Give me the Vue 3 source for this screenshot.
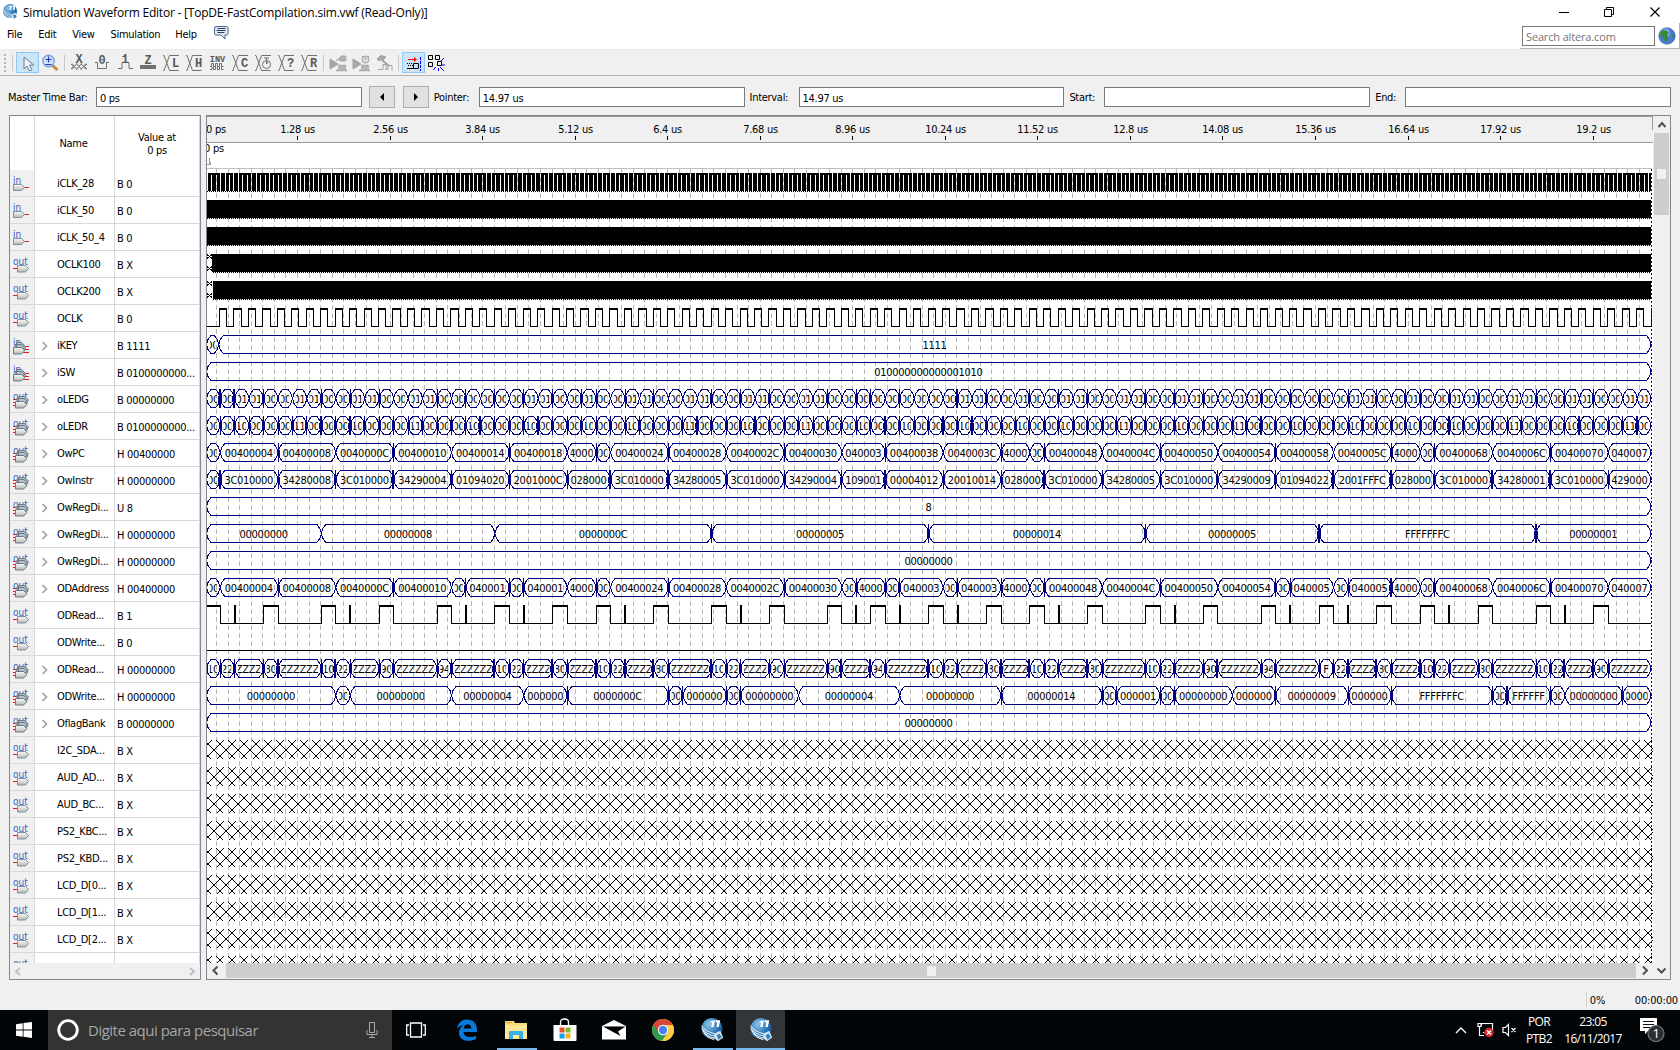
<script setup>
const UNIT = 14.46
const ORIGIN = 205.7
const END = 1651
const ROW_H = 27

const names = [
  ['in', 'iCLK_28', 'B 0'], ['in', 'iCLK_50', 'B 0'], ['in', 'iCLK_50_4', 'B 0'],
  ['out', 'OCLK100', 'B X'], ['out', 'OCLK200', 'B X'], ['out', 'OCLK', 'B 0'],
  ['inb', 'iKEY', 'B 1111'], ['inb', 'iSW', 'B 0100000000...'],
  ['outb', 'oLEDG', 'B 00000000'], ['outb', 'oLEDR', 'B 0100000000...'],
  ['outb', 'OwPC', 'H 00400000'], ['outb', 'OwInstr', 'H 00000000'],
  ['outb', 'OwRegDi...', 'U 8'], ['outb', 'OwRegDi...', 'H 00000000'],
  ['outb', 'OwRegDi...', 'H 00000000'], ['outb', 'ODAddress', 'H 00400000'],
  ['out', 'ODRead...', 'B 1'], ['out', 'ODWrite...', 'B 0'],
  ['outb', 'ODRead...', 'H 00000000'], ['outb', 'ODWrite...', 'H 00000000'],
  ['outb', 'OflagBank', 'B 00000000'],
  ['out', 'I2C_SDA...', 'B X'], ['out', 'AUD_AD...', 'B X'], ['out', 'AUD_BC...', 'B X'],
  ['out', 'PS2_KBC...', 'B X'], ['out', 'PS2_KBD...', 'B X'],
  ['out', 'LCD_D[0...', 'B X'], ['out', 'LCD_D[1...', 'B X'], ['out', 'LCD_D[2...', 'B X'],
  ['out', '', ''],
]
const rows = names.map(([kind, name, value]) => ({
  name, value, isIn: kind.startsWith('in'), bus: kind.endsWith('b'),
}))

const top = (i) => 173.5 + ROW_H * i
const px = (k) => (k === 0 ? 206.5 : k === 100 ? END : ORIGIN + UNIT * k)

/* A bus is written as "start label" pairs; "b" marks a glitchy edge and "t" a wider one. */
function parse(text) {
  const tokens = text.trim().split(/\s+/)
  const out = []
  for (let i = 0; i < tokens.length; i += 2) {
    out.push({ k: parseFloat(tokens[i]), mark: tokens[i].replace(/[\d.]/g, ''), label: tokens[i + 1] })
  }
  return out
}

const ledgOnes = [2, 3, 6, 7, 10, 11, 14, 15, 22, 23, 26, 29, 30, 33, 34, 37, 38, 41, 42, 52, 53, 56, 59, 60, 63, 64, 67, 68, 71, 72, 79, 80, 83, 86, 87, 90, 91, 94, 95, 98, 99]
const ledgBold = [1, 2, 4, 8, 10, 12, 16, 18, 20, 22, 24, 26, 27, 29, 31, 35, 37, 39, 43, 45, 46, 48, 52, 54, 57, 59, 61, 65, 67, 69, 73, 75, 77, 79, 81, 83, 84, 86, 88, 92, 94, 96]
const ledrTen = [2, 10, 18, 22, 26, 29, 37, 45, 48, 52, 56, 59, 67, 75, 79, 83, 86, 94]
const ledrEleven = [6, 14, 33, 41, 63, 71, 90, 98]
const units = [...Array(100).keys()]
const ledg = units.map((k) => ({ k, mark: [1, 2, 52].includes(k) ? 't' : ledgBold.includes(k) ? 'b' : '', label: ledgOnes.includes(k) ? '01' : '00' }))
const ledr = units.map((k) => ({ k, mark: k === 0 ? '' : [8, 10, 19, 23, 34, 38, 47, 51, 53, 73, 86, 95, 99].includes(k) ? 't' : 'b', label: ledrTen.includes(k) ? '10' : ledrEleven.includes(k) ? '11' : '00' }))

const busData = {
  6: parse('0 00 0.9 1111'),
  7: parse('0 010000000000001010'),
  8: ledg,
  9: ledr,
  10: parse('0 00 1 00400004 5b 00400008 9 0040000C 13b 00400010 17 00400014 21b 00400018 25 4000 27b 00 28 00400024 32b 00400028 36 0040002C 40b 00400030 44 040003 47b 00400038 51 0040003C 55b 4000 57 00 58b 00400048 62 0040004C 66b 00400050 70 00400054 74b 00400058 78 0040005C 82b 4000 84 00 85b 00400068 89 0040006C 93b 00400070 97 040007'),
  11: parse('0 00 1t 3C010000 5b 34280008 9b 3C010000 13t 34290004 17b 01094020 21b 2001000C 25b 028000 28t 3C010000 32t 34280005 36b 3C010000 40b 34290004 44b 109001 47t 00004012 51b 20010014 55b 028000 58t 3C010000 62b 34280005 66b 3C010000 70b 34290009 74b 01094022 78t 2001FFFC 82t 028000 85b 3C010000 89t 34280001 93t 3C010000 97b 429000'),
  12: parse('0 8'),
  13: parse('0 00000000 8 00000008 20 0000000C 35b 00000005 50b 00000014 65b 00000005 77t FFFFFFFC 92t 00000001'),
  14: parse('0 00000000'),
  15: parse('0 00 1 00400004 5b 00400008 9 0040000C 13b 00400010 17 00 18b 040001 21b 00 22b 040001 25 4000 27b 00 28 00400024 32b 00400028 36 0040002C 40b 00400030 44 00 45b 4000 47b 00 48b 040003 51 00 52b 040003 55b 4000 57 00 58b 00400048 62 0040004C 66b 00400050 70 00400054 74b 00 75b 040005 78 00 79b 040005 82t 4000 84 00 85b 00400068 89 0040006C 93b 00400070 97 040007'),
  18: parse('0b 10 1b 22 2b ZZZZ 4b 80 5t ZZZZZZ 8b 10 9t 22 10b ZZZZ 12b 90 13b ZZZZZZ 16b 94 17b ZZZZZZ 20t 10 21b 22 22b ZZZZ 24t 80 25b ZZZZ 27t 10 28b 22 29t ZZZZ 31t 80 32b ZZZZZZ 35t 10 36b 22 37b ZZZZ 39b 90 40b ZZZZZZ 43b 90 44t ZZZZ 46t 94 47b ZZZZZZ 50t 10 51b 22 52b ZZZZ 54b 80 55t ZZZZ 57t 10 58b 22 59b ZZZZ 61t 80 62b ZZZZZZ 65b 10 66b 22 67b ZZZZ 69b 90 70t ZZZZZZ 73b 94 74b ZZZZZZ 77b F 78b 22 79t ZZZZ 81t 80 82b ZZZZ 84t 10 85t 22 86b ZZZZ 88b 80 89b ZZZZZZ 92b 10 93b 22 94t ZZZZ 96t 90 97b ZZZZZZ'),
  19: parse('0 00000000 9 00 10 00000000 17 00000004 22 000000 25b 0000000C 32b 00 33b 000000 36b 00 37b 00000000 41 00000004 48 00000000 55b 00000014 62b 00 63b 000001 66b 00 67b 00000000 71 000000 74b 00000009 79b 000000 82b FFFFFFFC 89b 00 90t FFFFFF 93b 00 94 00000000 98b 0000'),
  20: parse('0 00000000'),
}

const buses = Object.entries(busData).map(([row, segs]) => {
  const y = top(+row)
  let d = ''
  let marks = ''
  const labels = []
  segs.forEach((s, i) => {
    const a = px(s.k)
    const b = px(i + 1 < segs.length ? segs[i + 1].k : 100)
    d += `M${a} ${y + 9}L${a + 1.5} ${y + 4}L${a + 4.5} ${y}H${b - 4.5}L${b - 1.5} ${y + 4}L${b} ${y + 9}L${b - 1.5} ${y + 14}L${b - 4.5} ${y + 18}H${a + 4.5}L${a + 1.5} ${y + 14}Z`
    if (s.mark) {
      const w = s.mark === 't' ? 2 : 1
      const x = Math.floor(a) - (w - 1)
      marks += `M${x} ${y - 0.5}h${w}v19h${-w}zM${x - 1} ${y + 6}h${w + 2}v6h${-w - 2}z`
    }
    labels.push({ text: s.label, x: a + 3.3, w: b - a - 6.6, c: (b - a - 6.6) / 2 })
  })
  return { row: +row, y, d, marks, labels }
})

/* iCLK_28: half period is slightly over one pixel, so columns alias. */
let clk28 = ''
{
  const half = 1.2911
  for (let n = 1, x = 205.6; x < END; n++) {
    const nx = x + half
    clk28 += `M${Math.floor(x)} 173h1v18h-1z`
    if (n % 2) {
      const w = Math.floor(nx) - Math.floor(x) + 1
      clk28 += `M${Math.floor(x)} 173h${w}v2h${-w}z`
    }
    x = nx
  }
}

let oclk = 'M206 326.5'
for (let k = 1; k < 100; k++) {
  const r = Math.floor(205 + UNIT * k) + 0.5
  const f = Math.floor(205 + UNIT * (k + 0.5)) + 0.5
  oclk += `H${r}V308.5H${f}V326.5`
}
oclk += 'H1651V308'
let oclkTop = ''
for (let k = 1; k < 100; k++) {
  oclkTop += `M${Math.floor(205 + UNIT * k)} 309.5H${Math.floor(205 + UNIT * (k + 0.5)) + 1}`
}

const readHigh = [4, 8, 12, 16, 20, 24, 27, 31, 35, 39, 43, 46, 50, 54, 57, 61, 65, 69, 73, 77, 81, 84, 88, 92, 96]
const readSpike = [2, 10, 18, 22, 29, 37, 45, 48, 52, 59, 67, 75, 79, 86, 94]
let read = 'M206 605.5H220.5V623.5'
let readThick = 'M206 606H221'
readHigh.forEach((k) => {
  const a = Math.floor(px(k)) + 0.5
  const b = Math.floor(px(k + 1)) + 0.5
  read += `H${a}V605.5H${b}V623.5`
  readThick += `M${a - 0.5} 606H${b + 0.5}`
})
read += 'H1651'
readSpike.forEach((k) => {
  readThick += `M${Math.round(px(k))} 605V624`
})

let unknown = ''
for (let i = 21; i < 30; i++) {
  const y = 173 + ROW_H * i
  for (let cx = 195.5; cx < 1665; cx += 12) {
    unknown += `M${cx - 3.5} ${y}l19 19M${cx + 4.5} ${y}l-19 19`
  }
}
const shortX = [254.5, 281.5].map((y) => `M207 ${y}l5 4m-5 0l5 -4M207 ${y + 12}l5 4m-5 0l5 -4`).join('')

const grid = []
for (let k = 1; k < 125; k++) grid.push(Math.floor(205 + 11.568 * k) + 0.5)

const ticks = ['1.28', '2.56', '3.84', '5.12', '6.4', '7.68', '8.96', '10.24', '11.52', '12.8', '14.08', '15.36', '16.64', '17.92', '19.2']
  .map((t) => ({ text: t + ' us', x: Math.floor(205 + 72.3 * parseFloat(t)) }))

const tools = ['X', '0', '1', 'Z', 'XL', 'XH', 'INV', 'XC', 'clock', 'X?', 'XR']
</script>

<template>
  <div class="screen">
    <header class="title">
      <svg width="16" height="16" viewBox="0 0 32 32"><use href="#quartus" /></svg>
      <span class="caption">Simulation Waveform Editor - [TopDE-FastCompilation.sim.vwf (Read-Only)]</span>
      <svg class="winbtns" width="110" height="20" viewBox="0 0 110 20" fill="none" stroke="#000">
        <path d="M9 10.500h10M54.500 7.500h7v7h-7zM56.500 7V5.500h7v7h-2" />
        <path d="M100.500 5.500l9 9m0-9l-9 9" stroke-width="1.200" />
      </svg>
    </header>

    <nav class="menu">
      <span>File</span><span>Edit</span><span>View</span><span>Simulation</span><span>Help</span>
      <svg width="16" height="16" viewBox="0 0 16 16">
        <path d="M3 1.500h10.500q1.500 0 1.500 1.500v5.500q0 1.500-1.500 1.500H12v4l-4-4H3q-1.500 0-1.500-1.500V3Q1.500 1.500 3 1.500z" fill="#dfe8f8" stroke="#50658c" />
        <path d="M4.500 3.500h8M3.500 5.500h9M4.500 7.500h7" stroke="#333d55" />
      </svg>
      <div class="searchbox">
        <div class="search">Search altera.com</div>
        <svg width="18" height="18" viewBox="0 0 18 18">
          <circle cx="9" cy="9" r="8.200" fill="#4a7bd0" />
          <circle cx="7" cy="6" r="5" fill="#9dbcee" opacity=".7" />
          <path d="M2 6l3-3 4 1 2 2-2 2 1 2-1 4-2 1-1-4-3-1zM14 8l3 0-1 4-2-2z" fill="#348a34" />
          <circle cx="9" cy="9" r="8.200" fill="none" stroke="#3c5fa8" stroke-width=".7" />
        </svg>
      </div>
    </nav>

    <div class="toolbar">
      <svg class="grip" width="16" height="21"><path d="M5 2v19" stroke="#b4b4b4" stroke-width="2" stroke-dasharray="2 2" /><path d="M12.500 3v16" stroke="#c8c8c8" /></svg>
      <span class="tool on"><svg width="23" height="21" viewBox="0 0 23 21">
        <path d="M8 5v12l3-3 2.500 5 2.500-1.200-2.500-4.800h4.200z" fill="#eef2fa" stroke="#6d7a96" />
      </svg></span>
      <span class="tool"><svg width="23" height="21" viewBox="0 0 23 21">
        <path d="M13 13l5.500 5" stroke="#c98a3c" stroke-width="3" />
        <circle cx="9.500" cy="9" r="5.700" fill="#cfe2fb" stroke="#7ba0d8" stroke-width="1.400" />
        <path d="M6.500 7.500h6M9.500 4.500v6M6.500 12.500h6" stroke="#2740b0" stroke-width="1.200" />
      </svg></span>
      <i class="sep"></i>
      <span v-for="t in tools" :key="t" class="tool"><svg width="23" height="21" viewBox="0 0 23 21" fill="none" stroke="#707070">
        <template v-if="t === 'X'">
          <path d="M3 12l2.500 2.500L3 17M19 12l-2.500 2.500L19 17M4 11.500l5 6M9 11.500l-5 6M8.500 11.500l5 6M13.500 11.500l-5 6M13 11.500l5 6M18 11.500l-5 6" />
          <text class="glyph" x="11" y="10.500">X</text>
        </template>
        <template v-else-if="t === '0'">
          <path d="M4 10.500h2.500v6h9v-6H18" /><text class="glyph" x="11" y="12">0</text>
        </template>
        <template v-else-if="t === '1'">
          <path d="M4 16.500h4v-6h7v6h4" /><text class="glyph" x="11" y="10.500">1</text>
        </template>
        <template v-else-if="t === 'Z'">
          <path d="M3 15h16" stroke-width="4" /><text class="glyph" x="11" y="11.500">Z</text>
        </template>
        <template v-else-if="t === 'INV'">
          <text class="inv" x="11.500" y="9.500">INV</text>
          <path d="M4 14.500h1.500v-3h2v3h2v-3h2v3h2v-3h2v3h2M4 17.500h2v-3M7.500 14.500v3h2v-3M11.500 14.500v3h2v-3M15.500 14.500v3h2" />
        </template>
        <template v-else>
          <path d="M3 3.500h1l5.500 15h9M11 3.500h8M3 18.500h1L9.500 3.500h2" />
          <g v-if="t === 'clock'"><circle cx="14.500" cy="12.500" r="4" /><path d="M12 6h5M14.500 6v6l1.500-2" /></g>
          <text v-else class="glyph" x="15.700" y="14.500">{{ t[1] }}</text>
        </template>
      </svg></span>
      <i class="sep"></i>
      <span v-for="n in 3" :key="n" class="tool"><svg width="23" height="21" viewBox="0 0 23 21" fill="none" stroke="#a2a2a2">
        <path v-if="n < 3" d="M3 7l8 5-8 5z" fill="#a8a8a8" />
        <path v-if="n < 3" d="M9 18.500h3v-5h2v5h2v-5h2v5h2" stroke-width="1.500" />
        <path v-if="n === 1" d="M9 8.500l3-1.500 2-3h4v5h-4l-2-1M18 5h2M18 8h2" fill="#b4b4b4" />
        <g v-if="n === 2"><circle cx="15.500" cy="7.500" r="3.500" fill="#dcdcdc" /><path d="M15.500 5v3M12 4l1 1M19 4l-1 1" /></g>
        <g v-if="n === 3"><path d="M4 7l4-3.500 5 1.500-3 3L9 7l-3 2z" fill="#a8a8a8" /><path d="M9 8l7 6" stroke-width="2" /><path d="M5 17.500h5v-5h3v5h2v-4h4v5" /></g>
      </svg></span>
      <i class="sep"></i>
      <span class="tool on"><svg width="23" height="21" viewBox="0 0 23 21" fill="none" stroke="#000">
        <path d="M6 7.500h6" stroke="#f00" /><path d="M12 5l3 2.500-3 2.500z" fill="#f00" stroke="none" />
        <path d="M5 11.500h6M6 13.500h5" stroke-dasharray="1 1" />
        <path d="M5 16.500h7M11.500 11.500h5v5h-5z" /><path d="M18.500 5v14" stroke="#00f" stroke-dasharray="3 1" />
      </svg></span>
      <span class="tool"><svg width="23" height="21" viewBox="0 0 23 21" fill="none" stroke="#000">
        <path d="M3.500 3.500h4v4h-4zM10.500 3.500h4v4h-4zM3.500 10.500h4v4h-4z" />
        <path d="M12.500 9.500h4v4h-4z" /><path d="M16 9l3-3M17 13h3M15 15l4 4M10.500 15l-2 3M13.500 16v3" stroke="#00f" />
      </svg></span>
    </div>

    <div class="timebar">
      <label>Master Time Bar:</label><div class="field">0 ps</div>
      <button class="nudge first"><svg width="6" height="8"><path d="M5 0v8L1 4z" /></svg></button>
      <button class="nudge"><svg width="6" height="8"><path d="M1 0v8l4-4z" /></svg></button>
      <label class="l2">Pointer:</label><div class="field">14.97 us</div>
      <label class="l3">Interval:</label><div class="field">14.97 us</div>
      <label class="l4">Start:</label><div class="field"></div>
      <label class="l5">End:</label><div class="field"></div>
    </div>

    <main class="panes">
      <section class="nodes">
        <div class="head"><span class="ic"></span><span class="nm">Name</span><span class="vl">Value at<br>0 ps</span></div>
        <div class="list">
          <div v-for="(r, i) in rows" :key="i" class="row">
            <span class="ic"><svg width="24" height="26" viewBox="10 0 24 26">
              <text class="dir" x="13" y="14">{{ r.isIn ? 'in' : 'out' }}</text>
              <template v-if="r.isIn">
                <g v-if="r.bus">
                  <path d="M23 14.500h6M23 17.500h6M23 20.500h6" stroke="#e02020" />
                  <path d="M16.500 10.500h5l4 4-4 4h-5zM15 12.500h6l5 4-5 4h-6z" fill="#b9c0c8" stroke="#66788c" />
                  <path d="M13.500 15.500h8l3.500 3-3.500 3.500h-8z" fill="url(#gate)" stroke="#66788c" />
                </g>
                <g v-else><path d="M24 17.500h5" stroke="#e02020" />
                  <path d="M13.500 14.500h8l3 3-3 3h-8z" fill="url(#gate)" stroke="#7b8fa6" /></g>
              </template>
              <template v-else>
                <g v-if="r.bus">
                  <path d="M13 13.500h5M13 16.500h5M13 19.500h4" stroke="#e02020" />
                  <path d="M18.500 10.500h6l4 3.500-4 3.500h-6zM17 12.500h7l4 3.500-4 4h-7z" fill="#b9c0c8" stroke="#66788c" />
                  <path d="M15.500 15.500h8l3.500 3-3.500 3.500h-8z" fill="url(#gate)" stroke="#66788c" />
                </g>
                <g v-else><path d="M13 17.500h4" stroke="#e02020" />
                  <path d="M17.500 14.500h8l3 3-3 3.500h-8z" fill="url(#gate)" stroke="#7b8fa6" /></g>
              </template>
            </svg></span>
            <span class="nm"><svg width="8" height="10" viewBox="0 0 8 10"><path v-if="r.bus" d="M1.500 1l4 4-4 4" fill="none" stroke="#a0a0a0" stroke-width="1.600" /></svg>{{ r.name }}</span>
            <span class="vl">{{ r.value }}</span>
          </div>
        </div>
        <div class="hscroll off">
          <svg width="8" height="9"><path d="M6 1L2 4.500 6 8" /></svg>
          <svg width="8" height="9"><path d="M2 1l4 3.500L2 8" /></svg>
        </div>
      </section>

      <section class="wave">
        <div class="upper">
          <svg class="canvas" width="1446" height="847" viewBox="207 116 1446 847" shape-rendering="crispEdges">
            <rect x="207" y="116" width="1446" height="26" fill="#f0f0f0" />
            <path d="M207 116.500h1446M207 142.500h1446M1652.500 116v14" stroke="#9a9a9a" fill="none" />
            <text x="206" y="133">0 ps</text>
            <g v-for="t in ticks" :key="t.text">
              <text :x="t.x + 0.5" y="133" text-anchor="middle">{{ t.text }}</text>
              <path :d="`M${t.x + 0.5} 136v4`" stroke="#000" />
            </g>
            <text x="204" y="152">0 ps</text>
            <path d="M209.500 158v6M207 164.500h3.500v-3" stroke="#a0a0a0" fill="none" />
            <path d="M207 168.500h1445" stroke="#bfbfbf" />
            <path v-for="x in grid" :key="x" :d="`M${x} 169V963`" stroke="#b8b8b8" stroke-dasharray="5 3" />

            <path :d="clk28" fill="#000" />
            <g fill="#000">
              <rect x="207" y="200" width="1444" height="18" /><rect x="207" y="227" width="1444" height="18" />
              <rect x="212" y="254" width="1439" height="18" /><rect x="213" y="281" width="1438" height="18" />
            </g>
            <path d="M207 191.500H1651M207 218.500H1651M207 245.500H1651M213 272.500H1651M213 299.500H1651" stroke="#000" stroke-dasharray="1 1" />
            <path :d="shortX" stroke="#000" />
            <path :d="oclk" stroke="#000" fill="none" />
            <path :d="oclkTop" stroke="#000" />
            <path :d="read" stroke="#000" fill="none" />
            <path :d="readThick" stroke="#000" stroke-width="2" />
            <path d="M207 650.500H1651" stroke="#000" />
            <path :d="unknown" stroke="#000" />
            <path d="M1651.500 169V963" stroke="#0000c8" stroke-dasharray="2 2" />

            <g v-for="b in buses" :key="b.row">
              <path :d="b.d" fill="none" stroke="#000080" />
              <path :d="b.marks" fill="#000080" />
              <svg v-for="(l, n) in b.labels" :key="n" :x="l.x" :y="b.y" :width="l.w" height="19">
                <text :x="l.c - 0.3" y="13.500" text-anchor="middle">{{ l.text }}</text>
              </svg>
            </g>
          </svg>
          <div class="vscroll">
            <svg width="16" height="17"><path d="M4.500 11l3.500-4 3.500 4" /></svg>
            <div class="thumb"><i></i></div>
          </div>
        </div>
        <div class="hscroll">
          <svg width="19" height="15"><path d="M10.500 3.500l-4 4 4 4" /></svg>
          <div class="thumb"><i></i></div>
          <svg width="17" height="15"><path d="M7 3.500l4 4-4 4" /></svg>
          <svg width="17" height="15" class="down"><path d="M4.500 5.500l4 4 4-4" /></svg>
        </div>
      </section>
    </main>

    <footer class="status"><span class="pct">0%</span><span>00:00:00</span></footer>

    <div class="taskbar">
      <span class="start"><svg width="16" height="16" viewBox="0 0 16 16"><path d="M0 2.200L6.700 1.200V7.600H0zM7.500 1.100L16 0v7.600H7.500zM0 8.400h6.700v6.400L0 13.800zM7.500 8.400H16V16l-8.500-1.200z" fill="#fff" /></svg></span>
      <div class="cortana">
        <svg width="22" height="22" viewBox="0 0 22 22"><circle cx="11" cy="11" r="9.300" fill="none" stroke="#fff" stroke-width="2.800" /></svg>
        <span>Digite aqui para pesquisar</span>
        <svg width="12" height="18" viewBox="0 0 12 18" fill="none" stroke="#a8a8a8"><path d="M3.500 1.500h5v10h-5zM1 9v4.500h10V9M6 13.500V17M3 16.500h6" /></svg>
      </div>
      <span class="app first"><svg width="20" height="16" viewBox="0 0 20 16" fill="none" stroke="#fff" stroke-width="1.300"><path d="M4.500 1h11v14h-11zM3 3H.700v10H3M17 3h2.300v10H17" /></svg></span>
      <span class="app"><svg width="22" height="22" viewBox="0 0 22 22">
        <path d="M1 10C2 3.500 6 .500 11 .500c6 0 10 4 10 10V13H7.500c.2 3.500 3 5 6.500 5 2.500 0 4.500-.6 6-1.600V20c-2 1.200-4.500 1.800-7.500 1.800C6.500 21.800 3 18.500 3 14c0-3.500 1.800-6.500 5-8.200C5 6.500 2.500 8 1 10zM7.700 9.500h7.600C15.300 7 14 5.300 11.700 5.300 9.500 5.300 8 7 7.700 9.500z" fill="#0a7ad8" /></svg></span>
      <span class="app open"><svg width="22" height="20" viewBox="0 0 22 20">
        <path d="M0 1h9l1 2h12v16H0z" fill="#f8d775" /><path d="M0 5h22v14H0z" fill="#ffe694" /><path d="M1 2h6v1H1z" fill="#e8a33a" />
        <path d="M4 11h14v8h-4v-4H8v4H4z" fill="#38b0e8" /></svg></span>
      <span class="app"><svg width="24" height="24" viewBox="0 0 24 24">
        <path d="M7.500 7V4q0-3 4-3t4 3v3" fill="none" stroke="#fff" stroke-width="1.300" /><path d="M.500 7h23v15q0 1-1 1h-21q-1 0-1-1z" fill="#fff" />
        <path d="M6.500 9.500h5v5h-5z" fill="#e64e27" /><path d="M12.500 9.500h5v5h-5z" fill="#7db92a" /><path d="M6.500 15.500h5v5h-5z" fill="#0f9fe2" /><path d="M12.500 15.500h5v5h-5z" fill="#f3b31d" /></svg></span>
      <span class="app"><svg width="24" height="20" viewBox="0 0 24 20"><path d="M0 6L12 0l12 6v13.500H0z" fill="#fff" /><path d="M1 6.500h22.500l-7.500 5 2.500 4.500z" fill="#000" /></svg></span>
      <span class="app"><svg width="22" height="22" viewBox="0 0 22 22">
        <circle cx="11" cy="11" r="11" fill="#e5c13e" /><path d="M11 11L1.500 5.500A11 11 0 0 0 10 22l5.800-8z" fill="#30984f" /><path d="M11 11V6h9.800A11 11 0 0 0 1.500 5.500L6 13z" fill="#d8473a" />
        <path d="M11 6h9.800A11 11 0 0 1 10 22l5.800-8.500z" fill="#fccc46" />
        <circle cx="11" cy="11" r="5.200" fill="#fff" /><circle cx="11" cy="11" r="4.200" fill="#4382f0" /></svg></span>
      <span class="app open"><svg width="24" height="24" viewBox="0 0 32 32"><use href="#quartus" /></svg></span>
      <span class="app active"><svg width="24" height="24" viewBox="0 0 32 32"><use href="#quartus" /></svg></span>
      <div class="tray">
        <svg width="12" height="8" viewBox="0 0 12 8"><path d="M1 7l5-5 5 5" fill="none" stroke="#fff" stroke-width="1.300" /></svg>
        <svg class="net" width="17" height="16" viewBox="0 0 17 16"><path d="M4.500 3.500V1.500h11v8M1 1.500h3v3H1zM2.500 5v8.500H7M6 10.500h3" fill="none" stroke="#fff" stroke-width="1.200" /><circle cx="12" cy="10.500" r="4.700" fill="#d9232e" /><path d="M10 8.500l4 4m0-4l-4 4" stroke="#fff" stroke-width="1.400" /></svg>
        <svg class="vol" width="15" height="14" viewBox="0 0 15 14"><path d="M1 4.500h2.500l3-3v11l-3-3H1zM9.500 5l4 4m0-4l-4 4" fill="none" stroke="#fff" stroke-width="1.200" /></svg>
        <div class="lang">POR<br>PTB2</div>
        <div class="clock">23:05<br>16/11/2017</div>
        <svg class="note" width="26" height="26" viewBox="0 0 26 26"><path d="M0 1h17v13H8l-3 3v-3H0z" fill="#fff" /><path d="M3 4.500h11M3 7.500h11M3 10.500h8" stroke="#111" stroke-width="1.200" /><circle cx="16" cy="16.500" r="8" fill="#2b2d30" stroke="#75787c" stroke-width="1.200" /><text x="16" y="21" text-anchor="middle">1</text></svg>
      </div>
    </div>

    <svg width="0" height="0" class="defs">
      <defs>
        <linearGradient id="gate" x1="0" y1="0" x2="0" y2="1"><stop offset="0" stop-color="#fafafa" /><stop offset="1" stop-color="#b8b8b0" /></linearGradient>
        <radialGradient id="ball" cx=".35" cy=".3" r=".8"><stop offset="0" stop-color="#8cc4ea" /><stop offset=".6" stop-color="#2c78b8" /><stop offset="1" stop-color="#0d4478" /></radialGradient>
        <g id="quartus">
          <circle cx="16" cy="14" r="14" fill="url(#ball)" />
          <path d="M14 4l6-1-2 9h-3l1-6h-2zM21 3l6 0-2 9h-3l1-6h-2z" fill="#fff" />
          <path d="M2 10q6 9 18 11M2 13q6 9 18 11M3 16q6 9 17 11M5 20q5 7 14 9" fill="none" stroke="#fff" stroke-width="1.300" />
          <path d="M19 21l8-4 4 9-7 5-5-4z" fill="#cfe4f2" /><path d="M22 23l4-2 3 4-4 4z" fill="#2f7fb4" />
        </g>
      </defs>
    </svg>
  </div>
</template>

<style>
body { overflow: hidden; background: #f0f0f0; }
</style>
<style scoped>
.screen { width: 1680px; height: 1050px; display: flex; flex-direction: column; background: #f0f0f0; color: #000; font: 11px/13px "DejaVu Sans Condensed", "DejaVu Sans", sans-serif; font-stretch: condensed; letter-spacing: -0.3px; overflow: hidden; }
.screen * { box-sizing: border-box; }
svg { display: block; flex: none; overflow: hidden; }
.defs { position: absolute; }
.title { height: 23px; flex: none; background: #fff; display: flex; align-items: center; padding: 0 20px 0 2px; gap: 5px; }
.caption { font: 12px "Open Sans", "Noto Sans", sans-serif; letter-spacing: -0.21px; flex: 1; padding-top: 1px; }
.menu { height: 27px; flex: none; background: #fff; border-bottom: 1px solid #ececec; display: flex; align-items: flex-start; padding: 5px 0 0 7px; }
.menu > span { margin-right: 16px; }
.menu > span:nth-child(4) { margin-right: 15px; }
.menu > svg { margin: -3px 0 0 0; }
.searchbox { margin: -5px 0 0 auto; width: 160px; height: 26px; border: solid #b4b4b4; border-width: 0 1px 1px 0; display: flex; align-items: center; padding-left: 2px; gap: 3px; }
.search { width: 133px; height: 20px; border: 1px solid #7a7a7a; color: #757575; font: 11px/18px "Open Sans", "Noto Sans", sans-serif; letter-spacing: -0.15px; padding: 1px 0 0 3px; }
.toolbar { height: 26px; flex: none; display: flex; padding-top: 2px; border-bottom: 1px solid #b4b4b4; background: #f0f0f0; }
.tool { width: 23px; height: 21px; }
.tool.on { background: #cce4f7; box-shadow: inset 0 0 0 1px #90c8f6; }
.sep { width: 6px; height: 16px; margin-top: 3px; background: linear-gradient(90deg, transparent 2px, #c8c8c8 2px, #c8c8c8 3px, transparent 3px); }
.glyph { font: bold 12px "Liberation Mono", monospace; fill: #585858; stroke: none; text-anchor: middle; letter-spacing: 0; }
.inv { font: bold 8.500px "Liberation Mono", monospace; fill: #585858; stroke: none; text-anchor: middle; letter-spacing: 0; }
.timebar { height: 39px; flex: none; display: flex; align-items: center; padding: 3px 9px 0 8px; }
.timebar label { width: 88px; flex: none; white-space: nowrap; }
.timebar .l2, .timebar .l3, .timebar .l4, .timebar .l5 { margin-left: 5px; }
.timebar .l2 { width: 45px; } .timebar .l3 { width: 49px; } .timebar .l4 { width: 35px; } .timebar .l5 { width: 30px; }
.field { flex: 1; height: 20px; background: #fff; border: 1px solid #7a7a7a; padding: 4px 3px 0; }
.nudge { width: 26px; height: 22px; background: #e1e1e1; border: 1px solid #adadad; padding: 0; margin-left: 8px; display: flex; align-items: center; justify-content: center; }
.nudge.first { margin-left: 7px; }
.panes { height: 865px; flex: none; display: flex; padding: 0 9px 0 9px; gap: 5px; }
.nodes { width: 192px; border: 1px solid #828790; background: #fff; display: flex; flex-direction: column; }
.head { height: 54px; flex: none; display: flex; text-align: center; align-items: stretch; }
.head > * { display: flex; align-items: center; justify-content: center; border-right: 1px solid #e5e5e5; }
.head .nm { padding-right: 2px; }
.head .vl { padding-top: 2px; }
.ic { width: 25px; flex: none; border-right: 1px solid #d8d8d8; }
.nm { width: 80px; flex: none; border-right: 1px solid #d8d8d8; }
.vl { width: 85px; flex: none; border-right: 1px solid #d8d8d8; white-space: nowrap; }
.list { flex: 1; overflow: hidden; }
.row { height: 27px; border-bottom: 1px solid #d8d8d8; display: flex; line-height: 28px; }
.row .ic { background: #f0f0f0; }
.row .nm { display: flex; align-items: center; padding-left: 6px; gap: 8px; white-space: nowrap; line-height: 28px; padding-top: 2px; }
.row .vl { padding: 1px 0 0 2px; }
.dir { font: 10px "DejaVu Sans Condensed", "DejaVu Sans", sans-serif; font-stretch: condensed; fill: #3a5fbe; letter-spacing: 0; }
.hscroll { height: 16px; flex: none; display: flex; background: #f0f0f0; }
.hscroll path, .vscroll path { fill: none; stroke: #505050; stroke-width: 2; }
.hscroll.off { justify-content: space-between; align-items: center; padding: 0 4px; }
.hscroll.off path { stroke: #bfbfbf; }
.wave { flex: 1; border: 1px solid #828790; display: flex; flex-direction: column; background: #f0f0f0; }
.upper { flex: 1; display: flex; min-height: 0; background: #fff; }
.canvas text { font: 11px "DejaVu Sans Condensed", "DejaVu Sans", sans-serif; font-stretch: condensed; letter-spacing: -0.28px; fill: #000; }
.vscroll { width: 17px; padding-left: 1px; background: #f0f0f0; display: flex; flex-direction: column; }
.thumb { background: #cdcdcd; display: flex; align-items: center; justify-content: center; }
.thumb i { width: 9px; height: 10px; background: #f0f0f0; }
.vscroll .thumb { height: 82px; width: 15px; }
.hscroll .thumb { flex: 1; height: 15px; }
.status { height: 30px; flex: none; display: flex; justify-content: flex-end; align-items: flex-start; padding-right: 2px; letter-spacing: -0.15px; }
.status span { padding-top: 14px; }
.status .pct { width: 49px; background: linear-gradient(#d0d0d0, #d0d0d0) 0 11px / 1px 17px no-repeat; padding-left: 4px; }
.taskbar { height: 40px; flex: none; background: #020508; display: flex; align-items: stretch; font-family: "Open Sans", "Noto Sans", sans-serif; font-stretch: normal; }
.start { width: 48px; display: flex; align-items: center; justify-content: center; }
.cortana { width: 344px; background: #333; display: flex; align-items: center; padding: 0 14px 0 9px; margin-right: 1px; }
.cortana span { flex: 1; margin-left: 9px; color: #a6a6a6; font-size: 15px; letter-spacing: -0.5px; white-space: nowrap; }
.app { width: 49px; display: flex; align-items: center; justify-content: center; }
.app.first { padding-right: 3px; }
.app.open { background: linear-gradient(#76b9ed, #76b9ed) 6px 38px / 40px 2px no-repeat; }
.app.active { background: linear-gradient(#76b9ed, #76b9ed) 0 38px / 49px 2px no-repeat, #333639; }
.tray { margin-left: auto; display: flex; align-items: center; color: #fff; font-size: 12px; line-height: 17px; text-align: center; padding-right: 14px; letter-spacing: -0.6px; }
.net { margin-left: 10px; } .vol { margin-left: 8px; }
.lang { width: 34px; margin-left: 5px; } .clock { width: 62px; margin-left: 6px; margin-right: 16px; white-space: nowrap; }
.note text { font: 13px "Open Sans", sans-serif; fill: #fff; }
</style>
